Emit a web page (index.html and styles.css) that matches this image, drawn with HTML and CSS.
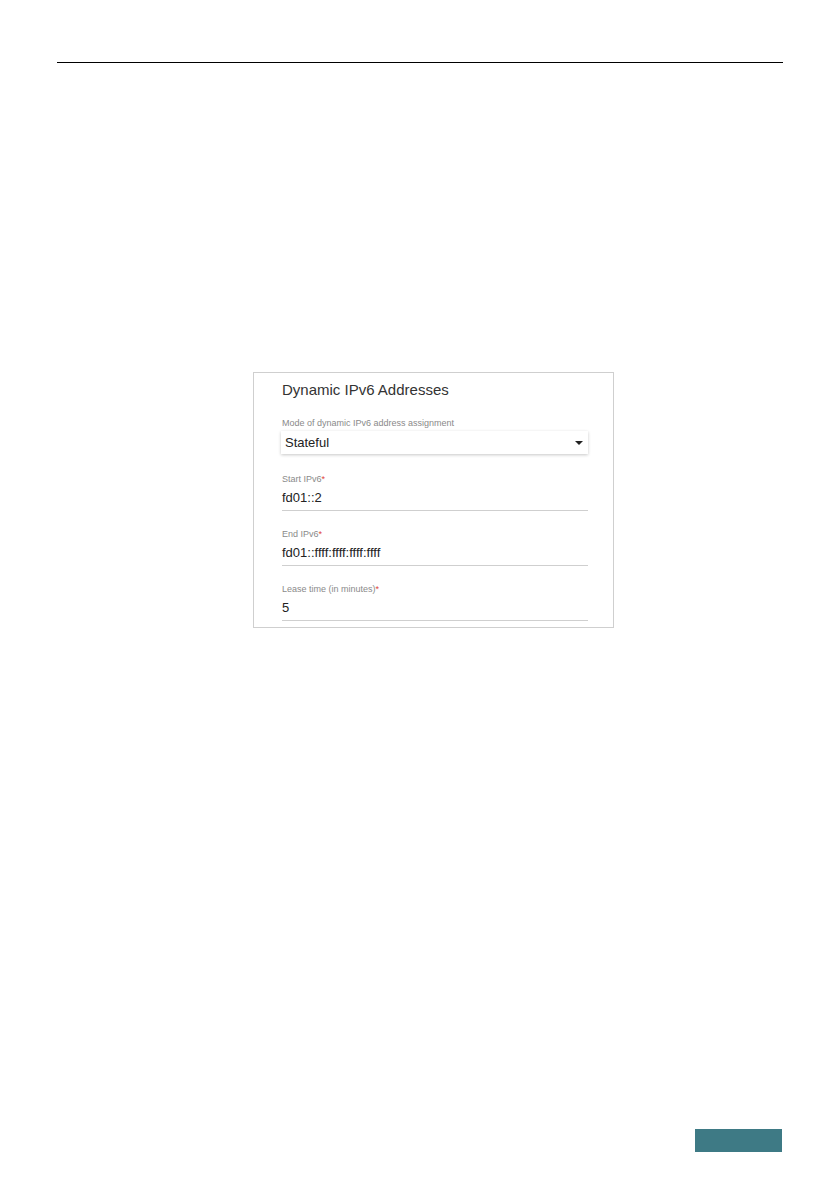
FILE: index.html
```html
<!DOCTYPE html>
<html lang="en">
<head>
  <meta charset="UTF-8" />
  <title>Dynamic IPv6 Addresses</title>
  <link rel="stylesheet" href="styles.css">
</head>
<body>
  <div class="page">
    <div class="rule"></div>

    <section class="card">
      <h2>Dynamic IPv6 Addresses</h2>

      <div class="label">Mode of dynamic IPv6 address assignment</div>
      <div class="select">
        <span>Stateful</span>
        <svg class="arrow" width="8" height="4" viewBox="0 0 8 4"><path d="M0 0h8L4 4z" fill="#222"/></svg>
      </div>

      <div class="field">
        <div class="label">Start IPv6<span class="req">*</span></div>
        <div class="value">fd01::2</div>
      </div>

      <div class="field">
        <div class="label">End IPv6<span class="req">*</span></div>
        <div class="value">fd01::ffff:ffff:ffff:ffff</div>
      </div>

      <div class="field">
        <div class="label">Lease time (in minutes)<span class="req">*</span></div>
        <div class="value">5</div>
      </div>
    </section>

    <div class="page-tab"></div>
  </div>
</body>
</html>
```

FILE: styles.css
```css
body {
  margin: 0;
  background: #fff;
  font-family: 'Liberation Sans', Arial, sans-serif;
}

.page {
  padding-top: 62px;
}

.rule {
  margin: 0 56px 0 57px;
  border-top: 1px solid #000;
}

.card {
  box-sizing: border-box;
  width: 361px;
  height: 256px;
  margin: 309px 0 0 253px;
  padding: 8px 25px 0 28px;
  border: 1px solid #cfcfcf;
}

.card h2 {
  margin: 0 0 19px;
  font-size: 15px;
  line-height: 18px;
  font-weight: normal;
  color: #333;
}

.label {
  font-size: 9px;
  line-height: 11px;
  color: #8a8a8a;
}

.req {
  color: #e0433a;
}

.select {
  display: flex;
  align-items: center;
  justify-content: space-between;
  height: 23px;
  margin: 2px 0 0 -1px;
  padding: 0 5px 0 4px;
  font-size: 13px;
  color: #222;
  box-shadow: 0 1px 3px rgba(0, 0, 0, 0.22);
}

.field {
  margin-top: 20px;
  padding-bottom: 3px;
  border-bottom: 1px solid #cfcfcf;
}

.field + .field {
  margin-top: 18px;
}

.field .value {
  margin-top: 4px;
  font-size: 13px;
  line-height: 18px;
  color: #222;
}

.page-tab {
  width: 87px;
  height: 23px;
  margin: 501px 0 0 695px;
  background: #3e7a85;
}
```
